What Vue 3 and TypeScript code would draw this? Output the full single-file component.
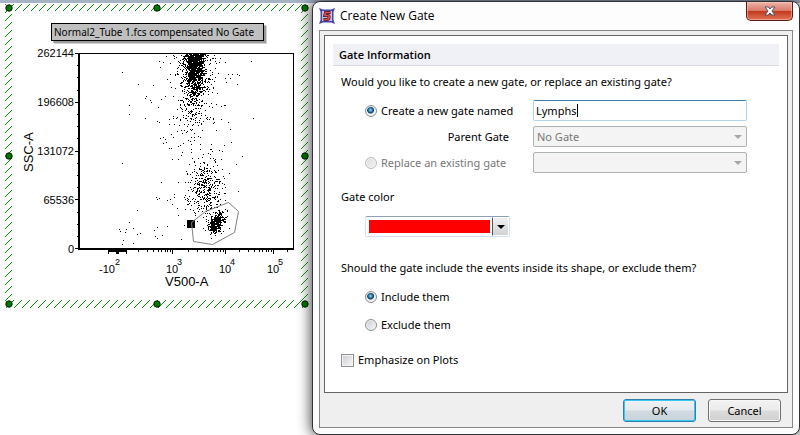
<script setup lang="ts">
import { ref } from 'vue'

type Dot = [number, number]

const gateName = ref('Lymphs')
const mode = ref('create')
const membership = ref('include')
const emphasize = ref(false)

// Deterministic generator, so the events stay put between renders
let seed = 20117
function rand(): number {
  seed = (seed * 16807) % 2147483647
  return seed / 2147483647
}
function gauss(): number {
  return Math.sqrt(-2 * Math.log(rand() + 1e-9)) * Math.cos(2 * Math.PI * rand())
}

const dots: Dot[] = []
function add(x: number, y: number) {
  if (x > 81 && x < 292 && y >= 54 && y < 247) dots.push([Math.round(x), Math.round(y)])
}

for (let i = 0; i < 950; i++) add(194.5 + gauss() * 4.8, 54 + Math.abs(gauss()) * 19)
for (let i = 0; i < 340; i++) add(194.5 + gauss() * 6.5, 54 + rand() * 42)
for (let i = 0; i < 210; i++) add(196 + gauss() * 16, 54 + Math.abs(gauss()) * 32)
for (let i = 0; i < 110; i++) add(193 + gauss() * 7, 98 + Math.abs(gauss()) * 15)
for (let i = 0; i < 75; i++) add(195 + gauss() * 17, 112 + rand() * 52)
for (let i = 0; i < 290; i++) add(207 + gauss() * 8, 187 + gauss() * 11)
for (let i = 0; i < 110; i++) add(201 + gauss() * 12, 188 + gauss() * 15)
for (let i = 0; i < 420; i++) {
  const t = gauss()
  add(216 + t * 2.6 + gauss() * 3.6, 222 - t * 3.8 + gauss() * 3.4)
}
const strays: Dot[] = [
  [122, 72], [153, 85], [129, 105], [129, 114], [151, 102], [122, 163], [156, 197], [157, 199],
  [159, 198], [137, 210], [129, 222], [119, 229], [120, 231], [126, 229], [125, 232], [133, 228],
  [137, 234], [140, 233], [123, 240], [122, 244], [133, 243], [154, 230], [157, 227], [155, 236],
  [157, 238], [161, 182], [170, 199], [162, 235], [167, 226], [172, 204], [184, 225], [181, 239],
  [251, 61], [237, 74], [239, 75], [228, 122], [230, 129], [231, 142], [160, 138], [163, 137],
]
strays.forEach(([x, y]) => add(x, y))

const dotPath = dots.map(([x, y]) => `M${x} ${y}h1v1h-1z`).join('')

// Diagonal hatching of the selection border: one line every 8 px
const hatchPath = Array.from({ length: 78 }, (_, i) => `M${i * 8 + 2} 0L${i * 8 - 308} 310`).join('')

const yLabels = ['262144', '196608', '131072', '65536', '0']
const yTicks = Array.from({ length: 17 }, (_, i) => ({ y: Math.round(53 + i * 12.2), major: i % 4 === 0 }))

const decades = [
  { start: 124, width: 48, power: 2 },
  { start: 172, width: 53, power: 3 },
  { start: 225, width: 48, power: 4 },
  { start: 273, width: 48, power: 5 },
]
const xTicks = decades.flatMap((d) =>
  Array.from({ length: 9 }, (_, k) => ({
    x: Math.round(d.start + d.width * Math.log10(k + 1)),
    long: k === 0 && d.power > 2,
  })).filter((t) => t.x > 127 && t.x < 293),
)
const xLabels = [
  { x: 99, sx: 115, text: '-10', power: '2' },
  { x: 166, sx: 177, text: '10', power: '3' },
  { x: 219, sx: 230, text: '10', power: '4' },
  { x: 267, sx: 278, text: '10', power: '5' },
]
const handles: Dot[] = [[9, 8], [157, 8], [305, 8], [9, 156], [305, 156], [9, 304], [157, 304], [305, 304]]
</script>

<template>
  <main class="desktop">
    <section class="plot">
      <svg viewBox="0 0 312 310" role="img" aria-label="SSC-A against V500-A">
        <clipPath id="frame">
          <path d="M5 4H308V308H5zM12 11V300H301V11z" clip-rule="evenodd" />
        </clipPath>
        <g clip-path="url(#frame)">
          <path :d="hatchPath" fill="none" stroke="#009a00" />
        </g>
        <g fill="#007800" stroke="#001800">
          <circle v-for="([x, y], i) in handles" :key="i" :cx="x" :cy="y" r="3.2" />
        </g>

        <rect x="54" y="26" width="213" height="18" fill="#000" opacity=".18" />
        <rect x="53" y="25" width="213" height="18" fill="#000" opacity=".25" />
        <rect x="51.5" y="23.5" width="212" height="17" fill="#c0c0c0" stroke="#000" />
        <text x="54" y="36" class="caption">Normal2_Tube 1.fcs compensated No Gate</text>

        <g shape-rendering="crispEdges" fill="#000">
          <path :d="dotPath" />
          <path d="M78 53h2v197h-2zM78 53h216v1h-216zM293 53h1v197h-1zM78 248h216v2h-216z" />
          <rect
            v-for="t in yTicks" :key="t.y" :x="t.major ? 75 : 77" :y="t.y"
            :width="t.major ? 3 : 1" height="1"
          />
          <rect v-for="t in xTicks" :key="t.x" :x="t.x" y="250" width="1" :height="t.long ? 4 : 2" />
          <path d="M108 250h19v2h-19zM108 250h1v4h-1zM126 250h1v4h-1zM116 250h3v4h-3z" />
          <rect x="187" y="220" width="8" height="8" />
        </g>
        <path
          d="M191.500 222.500L205.500 211.500 228.500 202.500 238.500 211.500 234.500 232.500 212.500 244.500 193.500 241.500z"
          fill="none" stroke="#808080"
        />

        <text v-for="(label, i) in yLabels" :key="label" x="74" :y="57 + i * 49" class="tick end">{{ label }}</text>
        <template v-for="l in xLabels" :key="l.x">
          <text :x="l.x" y="273" class="tick">{{ l.text }}</text>
          <text :x="l.sx" y="265" class="power">{{ l.power }}</text>
        </template>
        <text x="165" y="286" class="axis">V500-A</text>
        <text transform="translate(33 172) rotate(-90)" class="axis">SSC-A</text>
      </svg>
    </section>

    <form class="dialog" role="dialog" aria-labelledby="dialog-title" @submit.prevent>
      <header class="titlebar">
        <svg class="logo" viewBox="0 0 16 16" aria-hidden="true">
          <path d="M0 0L4 1.500H12L16 0 14.500 4V12L16 16 12 14.500H4L0 16 1.500 12V4z" fill="#4a44a8" />
          <path d="M3 3H13V13H3z" fill="#c3bfdc" />
          <path d="M11.500 4.500H6.500L5.800 7.500H8.500Q10.300 7.500 10 9.500T8 11.500H4.500" fill="none" stroke="#401824" stroke-width="3" />
          <path d="M11.500 4.500H6.500L5.800 7.500H8.500Q10.300 7.500 10 9.500T8 11.500H4.500" fill="none" stroke="#e04850" stroke-width="1.700" />
        </svg>
        <h1 id="dialog-title">Create New Gate</h1>
        <button type="button" class="close" aria-label="Close">
          <svg viewBox="0 0 12 10" aria-hidden="true">
            <path d="M1 1H4.300L6 3 7.700 1H11L7.900 5 11 9H7.700L6 7 4.300 9H1L4.100 5z" fill="#fff" stroke="#4c5264" />
          </svg>
        </button>
      </header>

      <div class="client">
        <div class="panel">
          <h2>Gate Information</h2>

          <div class="body">
            <p id="question-gate">Would you like to create a new gate, or replace an existing gate?</p>
            <div class="fields" role="radiogroup" aria-labelledby="question-gate">
              <label class="choice">
                <input v-model="mode" type="radio" name="mode" value="create">Create a new gate named
              </label>
              <span class="name">
                <input v-model="gateName" type="text" class="box" aria-label="Gate name">
                <span v-if="gateName === 'Lymphs'" class="caret"></span>
              </span>
              <label for="parent" class="parent">Parent Gate</label>
              <span class="select">
                <select id="parent" class="box" disabled><option>No Gate</option></select>
              </span>
              <label class="choice off">
                <input v-model="mode" type="radio" name="mode" value="replace" disabled>Replace an existing gate
              </label>
              <span class="select">
                <select class="box" aria-label="Existing gate" disabled><option></option></select>
              </span>
            </div>

            <p id="color-label" class="color-label">Gate color</p>
            <button type="button" class="color" aria-labelledby="color-label" aria-haspopup="listbox">
              <span class="swatch"></span>
              <span class="drop"></span>
            </button>

            <p id="question-events" class="events-label">Should the gate include the events inside its shape, or exclude them?</p>
            <div class="events" role="radiogroup" aria-labelledby="question-events">
              <label class="choice">
                <input v-model="membership" type="radio" name="membership" value="include">Include them
              </label>
              <label class="choice">
                <input v-model="membership" type="radio" name="membership" value="exclude">Exclude them
              </label>
            </div>

            <label class="check"><input v-model="emphasize" type="checkbox">Emphasize on Plots</label>
          </div>
        </div>

        <footer class="actions">
          <button type="submit" class="push primary">OK</button>
          <button type="button" class="push">Cancel</button>
        </footer>
      </div>
    </form>
  </main>
</template>

<style>
body {
  background: #fff;
}
</style>

<style scoped>
* {
  box-sizing: border-box;
}
.desktop {
  display: grid;
  grid-template-columns: minmax(0, 312fr) minmax(0, 488fr);
  align-items: start;
  min-height: 100vh;
  overflow: hidden;
  padding-top: 1px;
  background: linear-gradient(#a5b5c7, #a5b5c7) top / 100% 3px no-repeat #fff;
  color: #000;
  font: 11px/16px "Noto Sans", "Open Sans", sans-serif;
}
.plot svg {
  display: block;
  width: 100%;
  margin-top: -1px;
}
.tick,
.power,
.axis {
  font-family: "Liberation Sans", Arial, sans-serif;
  fill: #000;
}
.tick {
  font-size: 11px;
}
.caption {
  font: 10px "Noto Sans", "Open Sans", sans-serif;
}
.power {
  font-size: 9px;
}
.axis {
  font-size: 13px;
}
.end {
  text-anchor: end;
}

.dialog {
  padding: 0 6px 6px;
  border: 1px solid #303236;
  border-radius: 8px;
  background: #fdfdfd;
  box-shadow: 0 0 14px 1px rgba(0, 0, 0, 0.75);
}
.titlebar {
  display: flex;
  align-items: center;
  gap: 5px;
  height: 28px;
}
.logo {
  width: 16px;
  height: 16px;
}
h1 {
  flex: 1;
  margin: 0;
  font: 400 12px/16px "Open Sans", "Noto Sans", sans-serif;
}
.close {
  display: grid;
  place-items: center;
  align-self: flex-start;
  width: 47px;
  height: 19px;
  padding: 0;
  border: 1px solid #571c18;
  border-top: 0;
  border-radius: 0 0 5px 5px;
  background: linear-gradient(#eeb5a8, #da7a69 48%, #c23a20 52%, #df7254);
  box-shadow: inset 0 0 0 1px rgba(255, 210, 200, 0.5);
}
.close svg {
  width: 12px;
  height: 10px;
}
.client {
  padding: 4px;
  border: 1px solid #858585;
  background: #efefef;
}
.panel {
  padding: 8px;
  border: 1px solid #646464;
  background: #fff;
}
h2 {
  margin: 0;
  padding: 3px 6px 2px;
  border-bottom: 1px solid #dcdde3;
  background: #f0f1f6;
  font: 600 11px/16px "Open Sans", "Noto Sans", sans-serif;
}
.body {
  display: flex;
  flex-direction: column;
  padding: 8px 32px 16px 8px;
}
p {
  margin: 0;
}
.fields {
  display: grid;
  grid-template-columns: 168px minmax(0, 1fr);
  row-gap: 5px;
  align-items: center;
  margin: 10px 0 0 24px;
}
.choice,
.check {
  display: flex;
  align-items: center;
  gap: 4px;
}
.off {
  color: #777;
}
.parent {
  justify-self: end;
  padding-right: 24px;
}
.box {
  display: block;
  width: 100%;
  height: 21px;
  padding: 0 2px;
  border: 1px solid #b3d5ec;
  border-top-color: #3d7bad;
  border-radius: 2px;
  outline: 0;
  background: #fff;
  color: #000;
  font: inherit;
}
select.box {
  padding: 0 3px;
  border-color: #adb2b5;
  background: #f4f4f4;
  color: #777;
  opacity: 1;
  appearance: none;
}
.name,
.select {
  position: relative;
}
.caret {
  position: absolute;
  top: 4px;
  left: 44px;
  width: 1px;
  height: 13px;
  background: #000;
}
.name:focus-within .caret {
  display: none;
}
.select::after {
  position: absolute;
  top: 9px;
  right: 5px;
  border: 4px solid transparent;
  border-top-color: #a6a6a6;
  border-bottom: 0;
  content: "";
}
.color-label {
  margin-top: 16px;
}
.color {
  display: flex;
  width: 145px;
  height: 21px;
  margin: 11px 0 0 24px;
  padding: 0;
  border: 1px solid #d5e0ee;
  border-top-color: #8c9fb8;
  border-radius: 2px;
  background: #fff;
}
.swatch {
  flex: 1;
  height: 13px;
  margin: 3px 2px 3px 3px;
  background: #f00;
}
.drop {
  display: grid;
  place-items: center;
  width: 17px;
  height: 19px;
  border: 1px solid #fff;
  border-left-color: #555;
  background: linear-gradient(#f2f2f2, #d2d2d2);
}
.drop::after {
  border: 4px solid transparent;
  border-top-color: #000;
  border-bottom: 0;
  content: "";
}
.events-label {
  margin-top: 23px;
}
.events {
  display: grid;
  gap: 12px;
  margin: 13px 0 0 24px;
}
.check {
  margin-top: 19px;
}
input[type="radio"],
input[type="checkbox"] {
  flex: none;
  width: 12px;
  height: 12px;
  margin: 0;
  border: 1px solid #8e8f8f;
  background: linear-gradient(135deg, #c9ccd2, #f8f8f8);
  box-shadow: inset 0 0 0 1px #f4f4f4;
  appearance: none;
}
input[type="radio"] {
  border-radius: 50%;
}
input[type="radio"]:checked {
  background: radial-gradient(circle at 45% 40%, #9bdcf5 0, #2478ab 2px, #0d3a5c 3px, #e8edf0 4px);
}
input[type="radio"]:disabled {
  border-color: #bcbcbc;
  background: linear-gradient(135deg, #dcdcdc, #f4f4f4);
}
input[type="checkbox"] {
  width: 13px;
  height: 13px;
}
.actions {
  display: flex;
  justify-content: flex-end;
  gap: 12px;
  padding: 6px 7px 0 0;
}
.push {
  width: 73px;
  height: 23px;
  margin-bottom: 1px;
  padding: 0;
  border: 1px solid #707070;
  border-radius: 3px;
  background: linear-gradient(#f2f2f2, #ebebeb 49%, #dcdcdc 51%, #cfcfcf);
  box-shadow: inset 0 0 0 1px #f8f8f8;
  color: #000;
  font: inherit;
}
.primary {
  border-color: #2f7fae;
  background: linear-gradient(#eff2f4, #e3e9ed 49%, #d2dbe2 51%, #c7d2da);
  box-shadow: inset 0 0 0 1px #35c8f5;
}
</style>
